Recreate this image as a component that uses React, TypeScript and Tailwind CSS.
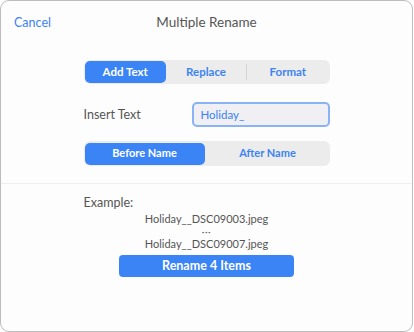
import React from "react";

export default function App() {
  const font = { fontFamily: "Lato, 'Noto Sans', sans-serif" };
  return (
    <div className="w-[414px] h-[332px] bg-white" style={font}>
      <div className="w-[413px] h-[332px] border border-[#bdbdbd] rounded-[9px] bg-[#fdfdfd] flex flex-col">
        <div className="grid grid-cols-[1fr_auto_1fr] items-center h-[44px] px-[13px]">
          <span className="text-[12.5px] text-[#3b82f6] leading-none">Cancel</span>
          <span className="text-[13.5px] text-[#555] leading-none">Multiple Rename</span>
          <span />
        </div>
        <div className="flex flex-col items-center pt-[15px]">
          <div className="w-[246px] h-[24px] rounded-[6px] bg-[#ececec] p-[1px] grid grid-cols-3 items-center text-[11.5px] font-bold">
            <div className="h-[22px] rounded-[5px] bg-[#3a84f6] text-white flex items-center justify-center">Add Text</div>
            <div className="h-[16px] text-[#3d84f3] flex items-center justify-center border-r border-[#d6d6d6]">Replace</div>
            <div className="text-[#3d84f3] flex items-center justify-center">Format</div>
          </div>
          <div className="w-[246px] mt-[18px] flex items-center justify-between">
            <span className="text-[12.5px] text-[#555] pt-[2px]">Insert Text</span>
            <div className="w-[138px] h-[25px] rounded-[5px] border-2 border-[#8ab3f5] bg-[#efeff4] flex items-center px-[7px] text-[11.5px] text-[#3b82f6]">Holiday_</div>
          </div>
          <div className="w-[246px] h-[25px] mt-[14px] rounded-[6px] bg-[#ececec] p-[1px] grid grid-cols-2 items-center text-[11px] font-bold">
            <div className="h-[22px] mr-[2px] rounded-[5px] bg-[#3a84f6] text-white flex items-center justify-center">Before Name</div>
            <div className="text-[#3d84f3] flex items-center justify-center">After Name</div>
          </div>
        </div>
        <div className="mt-[17px] border-t border-[#efefef] flex flex-col items-center">
          <div className="w-[246px] mt-[12px] text-[12.5px] text-[#555] leading-[14px]">Example:</div>
          <div className="mt-[1.5px] text-[11px] text-[#555] flex flex-col items-center">
            <span className="block leading-[13px]">Holiday__DSC09003.jpeg</span>
            <span className="block text-[10px] leading-[12px] tracking-[0.5px]">···</span>
            <span className="block leading-[13px]">Holiday__DSC09007.jpeg</span>
          </div>
          <div className="mt-[5.5px] w-[175px] h-[22px] rounded-[4px] bg-[#3a84f6] text-white text-[12.5px] font-bold flex items-center justify-center">Rename 4 Items</div>
        </div>
      </div>
    </div>
  );
}
